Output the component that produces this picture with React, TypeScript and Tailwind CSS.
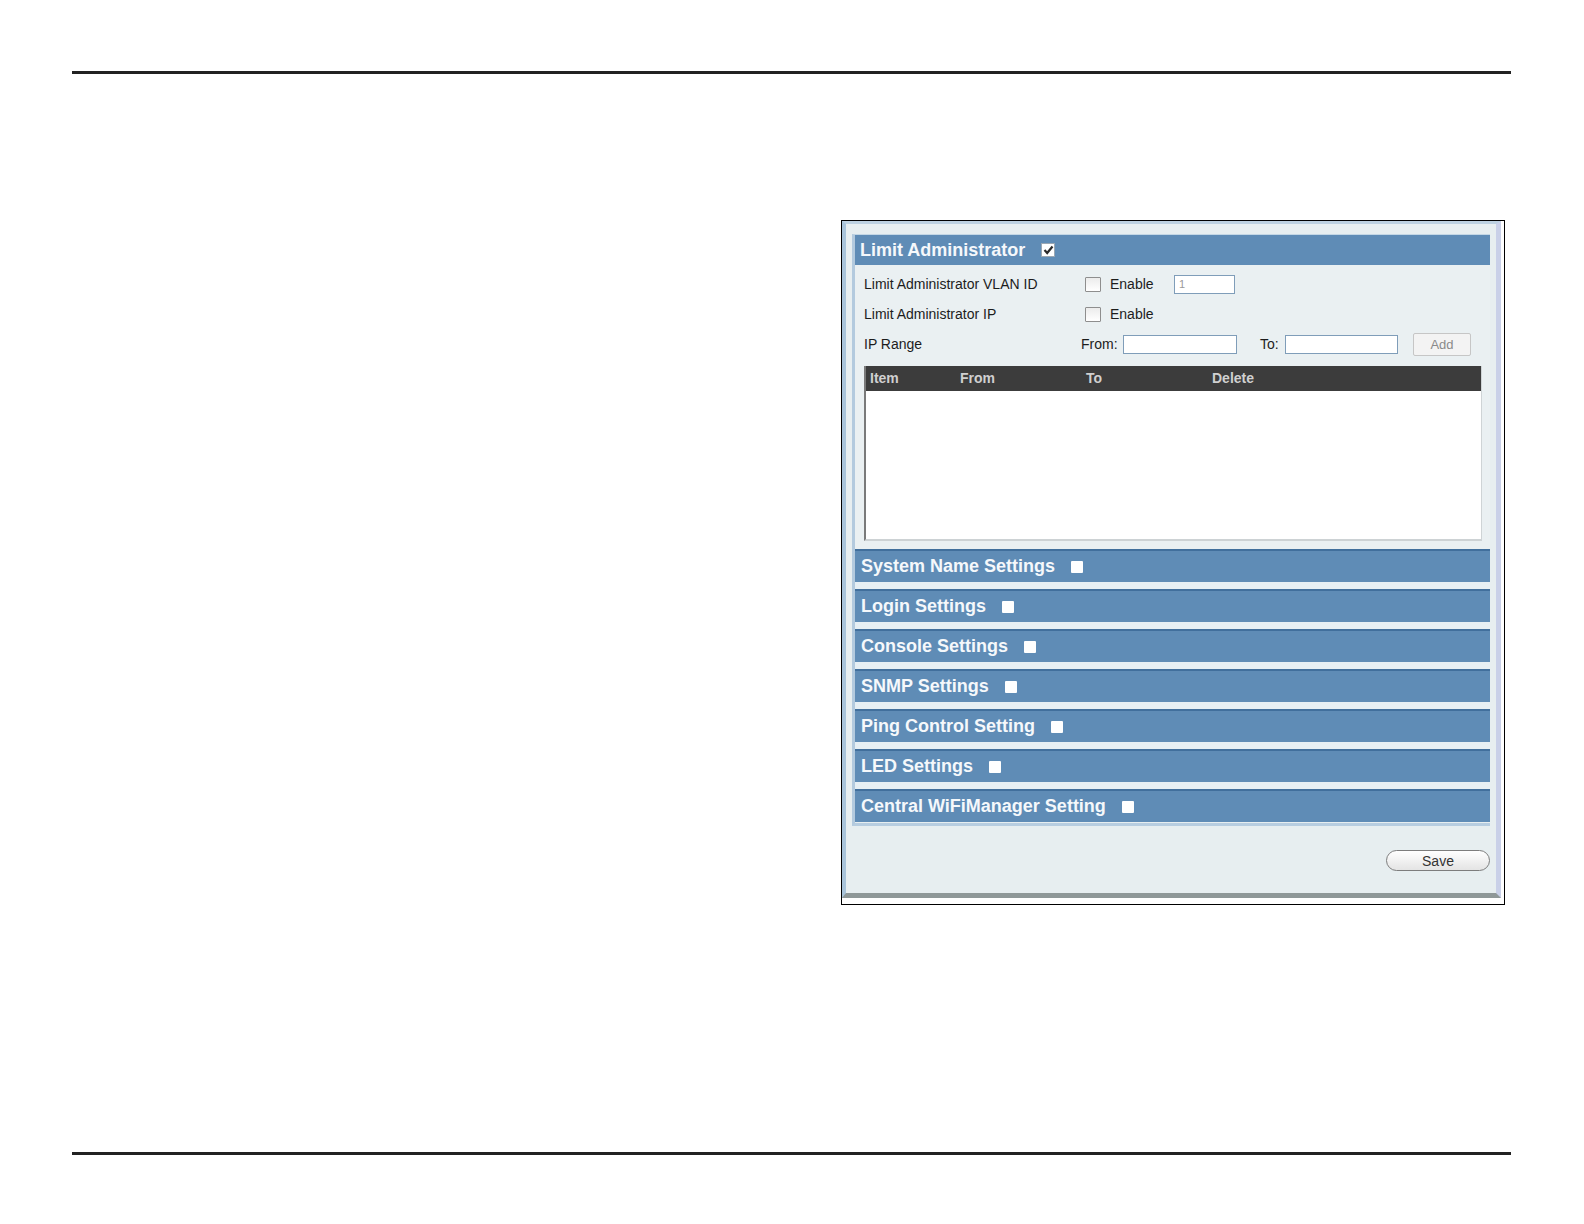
import React from 'react'

const SECTIONS = [
  'System Name Settings',
  'Login Settings',
  'Console Settings',
  'SNMP Settings',
  'Ping Control Setting',
  'LED Settings',
  'Central WiFiManager Setting',
]

function FormCheckbox() {
  return (
    <span className="inline-block w-[16px] h-[15px] border border-[#8e8e8e] bg-gradient-to-b from-[#ececec] to-white rounded-[1px]" />
  )
}

function TextInput({ width, value }: { width: string; value?: string }) {
  return (
    <div className={`${width} h-[19px] border border-[#7f9db9] bg-white flex items-center pl-[4px] text-[11px] text-[#9a9a9a]`}>
      {value}
    </div>
  )
}

function SectionBar({ title }: { title: string }) {
  return (
    <div className="h-[33px] bg-[#5f8cb6] border-t-2 border-[#416f9c] flex items-center pl-[6px]">
      <span className="text-[18px] font-bold text-[#f5f8fb]">{title}</span>
      <span className="ml-[16px] w-[12px] h-[12px] bg-white rounded-[1px]" />
    </div>
  )
}

export default function App() {
  return (
    <div className="w-[1584px] h-[1224px] bg-white flex flex-col font-['Liberation_Sans',Arial,sans-serif]">
      <div className="mt-[71px] ml-[72px] w-[1439px] h-[3px] bg-[#222]" />

      {/* screenshot frame */}
      <div className="mt-[146px] ml-[841px] w-[664px] border border-black bg-white pr-[3px] pb-[6px]">
        <div className="bg-[#e7eef0] border-l-4 border-l-[#a9c4da] border-t-[3px] border-t-[#bdd1e1] border-r-[5px] border-r-[#c9d0e8] border-b-[5px] border-b-[#8f9898] pt-[10px] pl-[6px] pr-[6px] pb-[22px]">
          <div className="border-l-[3px] border-[#b3cade] border-t border-t-[#c4d7e5] border-b-[3px] border-b-[#b7cde0] pb-[1px]">
            <div className="h-[30px] bg-[#5f8cb6] flex items-center pl-[5px]">
              <span className="text-[18px] font-bold text-[#f5f8fb]">Limit Administrator</span>
              <span className="ml-[16px] w-[14px] h-[14px] bg-white border border-[#9aa7b3] flex items-center justify-center">
                <svg width="11" height="10" viewBox="0 0 11 10">
                  <path d="M1.5 5 L4.2 8 L9.5 1.5" fill="none" stroke="#2b2b2b" strokeWidth="2.2" />
                </svg>
              </span>
            </div>

            {/* form */}
            <div className="bg-[#eaf0f2] pt-[4px] pl-[9px] pr-[8px] text-[14px] text-[#1c1c1c]">
              <div className="h-[30px] flex items-center">
                <span className="w-[221px]">Limit Administrator VLAN ID</span>
                <FormCheckbox />
                <span className="ml-[9px] w-[64px]">Enable</span>
                <TextInput width="w-[61px]" value="1" />
              </div>
              <div className="h-[30px] flex items-center">
                <span className="w-[221px]">Limit Administrator IP</span>
                <FormCheckbox />
                <span className="ml-[9px]">Enable</span>
              </div>
              <div className="h-[31px] flex items-center">
                <span className="w-[217px]">IP Range</span>
                <span className="w-[42px]">From:</span>
                <TextInput width="w-[114px]" />
                <span className="ml-[23px] w-[25px]">To:</span>
                <TextInput width="w-[113px]" />
                <button className="ml-[15px] w-[58px] h-[23px] border border-[#c6c6c6] bg-[#f3f3f3] rounded-[2px] text-[13px] text-[#8a8a8a]">
                  Add
                </button>
              </div>

              {/* table */}
              <div className="mt-[6px] border-l-2 border-l-[#7a7a7a] border-r border-r-[#cfd4d6] border-b-2 border-b-[#cdd2d4]">
                <div className="h-[25px] bg-[#3c3c3c] flex items-center pl-[4px] text-[14px] font-bold text-[#d0d0d0]">
                  <span className="w-[90px]">Item</span>
                  <span className="w-[126px]">From</span>
                  <span className="w-[126px]">To</span>
                  <span>Delete</span>
                </div>
                <div className="h-[148px] bg-white" />
              </div>
            </div>

            <div className="bg-[#eaf0f2] h-[8px]" />
            <div className="flex flex-col gap-[7px] bg-[#e6eff4]">
              {SECTIONS.map((s) => (
                <SectionBar key={s} title={s} />
              ))}
            </div>
          </div>

          <div className="mt-[24px] flex justify-end">
            <button className="w-[104px] h-[21px] rounded-full border border-[#7d7d7d] bg-gradient-to-b from-white to-[#e4e4e4] text-[14px] text-[#333] leading-none">
              Save
            </button>
          </div>
        </div>
      </div>

      <div className="mt-[247px] ml-[72px] w-[1439px] h-[3px] bg-[#222]" />
    </div>
  )
}
